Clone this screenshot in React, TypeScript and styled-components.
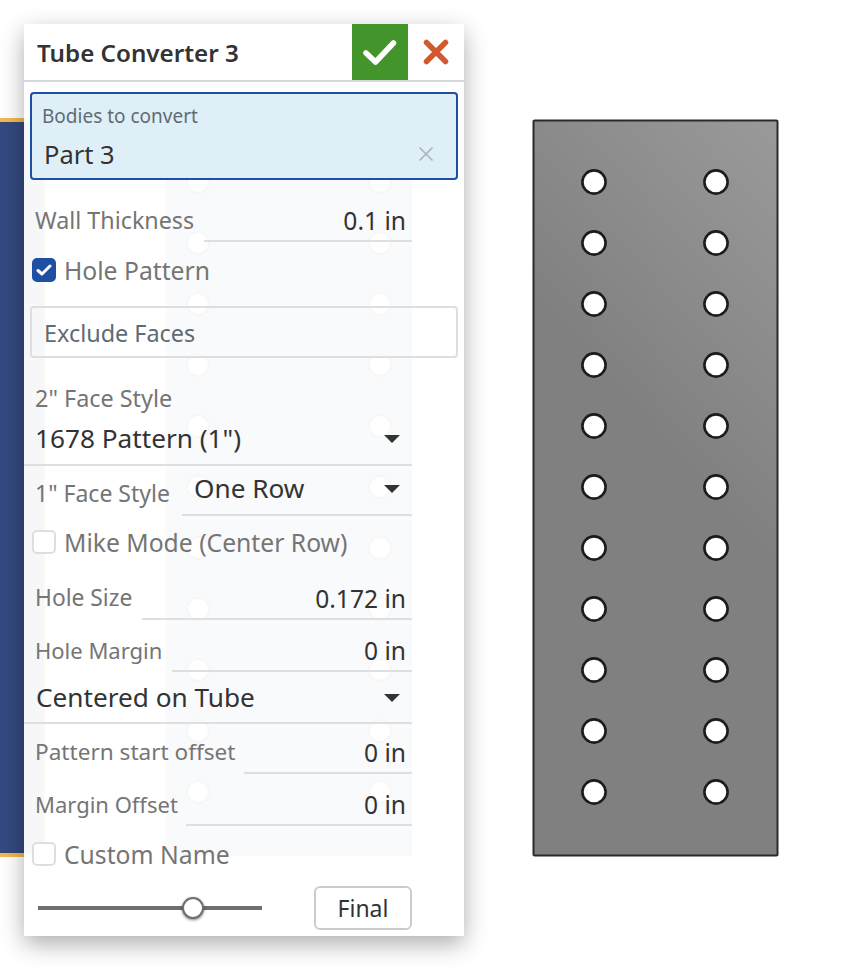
import React from 'react';
import styled, { createGlobalStyle } from 'styled-components';

const GlobalStyle = createGlobalStyle`
    html, body {
        margin: 0;
        padding: 0;
        background: #fff;
    }
    body {
        font-family: "Noto Sans", "Liberation Sans", sans-serif;
        overflow: hidden;
    }
`;

const HOLE_ROWS = [182, 243, 304, 365, 426, 487, 548, 609, 670, 731, 792];

const App: React.FC = () => {
    return (
        <Page>
            <GlobalStyle />
            <BlueBody />
            <GhostPart />
            <TubePart />
            <Panel>
                <Header>
                    <Title>Tube Converter 3</Title>
                    <AcceptButton>
                        <svg width="34" height="28" viewBox="0 0 34 28">
                            <path d="M3 15 L12.5 24 L30.5 5" fill="none" stroke="#fff" strokeWidth="5.5" strokeLinecap="round" strokeLinejoin="round" />
                        </svg>
                    </AcceptButton>
                    <CancelButton>
                        <svg width="26" height="26" viewBox="0 0 26 26">
                            <path d="M3.5 3.5 L22.5 22.5 M22.5 3.5 L3.5 22.5" fill="none" stroke="#d2582f" strokeWidth="5.5" strokeLinecap="round" />
                        </svg>
                    </CancelButton>
                </Header>
                <Body>
                    <QueryBox $active>
                        <QueryLabel>Bodies to convert</QueryLabel>
                        <QueryValue>
                            Part 3
                            <svg width="16" height="16" viewBox="0 0 16 16">
                                <path d="M1.5 1.5 L14.5 14.5 M14.5 1.5 L1.5 14.5" fill="none" stroke="#a9b4bb" strokeWidth="1.6" />
                            </svg>
                        </QueryValue>
                    </QueryBox>
                    <NumberField label="Wall Thickness" value="0.1 in" lineFrom={204} top={26} labelSize={23.3} />
                    <CheckRow $top={16}>
                        <CheckBox $checked>
                            <svg width="16" height="14" viewBox="0 0 16 14">
                                <path d="M2 7.5 L6 11 L14 3" fill="none" stroke="#fff" strokeWidth="3" strokeLinecap="round" strokeLinejoin="round" />
                            </svg>
                        </CheckBox>
                        Hole Pattern
                    </CheckRow>
                    <QueryBox $top={24}>
                        <ExcludeLabel>Exclude Faces</ExcludeLabel>
                    </QueryBox>
                    <StackLabel>2" Face Style</StackLabel>
                    <SelectRow $height={54}>
                        <SelectText>1678 Pattern (1")</SelectText>
                        <Caret />
                    </SelectRow>
                    <InlineSelect>
                        <InlineLabel>1" Face Style</InlineLabel>
                        <SelectRow $height={50} $width={230} $lift={5}>
                            <SelectText $pad={12}>One Row</SelectText>
                            <Caret />
                        </SelectRow>
                    </InlineSelect>
                    <CheckRow $top={14}>
                        <CheckBox />
                        Mike Mode (Center Row)
                    </CheckRow>
                    <NumberField label="Hole Size" value="0.172 in" lineFrom={142} top={30} labelSize={22.8} />
                    <NumberField label="Hole Margin" value="0 in" lineFrom={172} top={16} />
                    <SelectRow $height={52}>
                        <SelectText $pad={12}>Centered on Tube</SelectText>
                        <Caret />
                    </SelectRow>
                    <NumberField label="Pattern start offset" value="0 in" lineFrom={244} top={14} labelSize={22.6} />
                    <NumberField label="Margin Offset" value="0 in" lineFrom={186} top={16} />
                    <CheckRow $top={16}>
                        <CheckBox />
                        Custom Name
                    </CheckRow>
                    <Footer>
                        <SliderTrack>
                            <SliderKnob />
                        </SliderTrack>
                        <FinalButton>Final</FinalButton>
                    </Footer>
                </Body>
            </Panel>
        </Page>
    );
};

export default App;

const NumberField: React.FC<{ label: string; value: string; lineFrom: number; top: number; labelSize?: number }> = ({ label, value, lineFrom, top, labelSize }) => (
    <NumberRow $top={top}>
        <FieldLabel $size={labelSize}>{label}</FieldLabel>
        <NumberValue $from={lineFrom}>{value}</NumberValue>
    </NumberRow>
);

const BlueBody: React.FC = () => (
    <BlueSvg width="46" height="739" viewBox="0 0 46 739">
        <rect x="0" y="0" width="46" height="739" fill="#f1b94f" />
        <rect x="0" y="4" width="44" height="731" fill="#34497f" />
    </BlueSvg>
);

const GhostPart: React.FC = () => (
    <GhostSvg width="246" height="736" viewBox="0 0 246 736">
        <rect x="0" y="0" width="246" height="736" fill="#7f8896" />
        {HOLE_ROWS.map((y) => (
            <g key={y}>
                <circle cx="32" cy={y - 120} r="11" fill="#fff" stroke="#444" strokeWidth="2" />
                <circle cx="214" cy={y - 120} r="11" fill="#fff" stroke="#444" strokeWidth="2" />
            </g>
        ))}
    </GhostSvg>
);

const TubePart: React.FC = () => (
    <PartSvg width="248" height="738" viewBox="0 0 248 738">
        <defs>
            <linearGradient id="tubeFace" gradientUnits="userSpaceOnUse" x1="245" y1="0" x2="20" y2="200">
                <stop offset="0" stopColor="#9a9a9a" />
                <stop offset="1" stopColor="#808080" />
            </linearGradient>
        </defs>
        <rect x="1.5" y="1.5" width="244" height="735" rx="1" fill="url(#tubeFace)" stroke="#2a2a2a" strokeWidth="2" />
        {HOLE_ROWS.map((y) => (
            <g key={y}>
                <circle cx="62" cy={y - 119} r="11.6" fill="#fff" stroke="#1c1c1c" strokeWidth="2.6" />
                <circle cx="184" cy={y - 119} r="11.6" fill="#fff" stroke="#1c1c1c" strokeWidth="2.6" />
            </g>
        ))}
    </PartSvg>
);

const Page = styled.div`
    position: relative;
    width: 854px;
    height: 968px;
    overflow: hidden;
    background: #fff;
`;

const BlueSvg = styled.svg`
    position: absolute;
    left: 0;
    top: 118px;
`;

const GhostSvg = styled.svg`
    position: absolute;
    left: 166px;
    top: 120px;
`;

const PartSvg = styled.svg`
    position: absolute;
    left: 532px;
    top: 119px;
    filter: blur(0.5px);
`;

const Panel = styled.div`
    position: absolute;
    left: 24px;
    top: 24px;
    width: 440px;
    height: 912px;
    background: rgba(255, 255, 255, 0.955);
    box-shadow: 0 8px 22px rgba(0, 0, 0, 0.32);
`;

const Header = styled.div`
    display: flex;
    align-items: stretch;
    height: 56px;
    background: #fff;
    border-bottom: 2px solid #d5d9dc;
`;

const Title = styled.div`
    flex: 1;
    padding-left: 13px;
    line-height: 57px;
    font-size: 24.2px;
    font-weight: 600;
    color: #333;
`;

const AcceptButton = styled.div`
    width: 56px;
    height: 56px;
    background: #43942a;
    display: flex;
    align-items: center;
    justify-content: center;
`;

const CancelButton = styled.div`
    width: 56px;
    height: 56px;
    display: flex;
    align-items: center;
    justify-content: center;
`;

const Body = styled.div`
    display: flex;
    flex-direction: column;
`;

const QueryBox = styled.div<{ $active?: boolean; $top?: number }>`
    box-sizing: border-box;
    margin: ${(p) => (p.$active ? 10 : p.$top ?? 0)}px 6px 0;
    height: ${(p) => (p.$active ? 88 : 52)}px;
    padding: ${(p) => (p.$active ? '10px 12px 0 10px' : '11px 12px 0 12px')};
    border: 2px solid ${(p) => (p.$active ? '#1f4fa3' : '#dcdee0')};
    border-radius: 4px;
    background: ${(p) => (p.$active ? '#dfeff8' : 'transparent')};
`;

const QueryLabel = styled.div`
    font-size: 19px;
    line-height: 24px;
    color: #5f6b73;
`;

const QueryValue = styled.div`
    display: flex;
    align-items: center;
    justify-content: space-between;
    margin-top: 10px;
    padding: 0 10px 0 2px;
    font-size: 25.5px;
    line-height: 32px;
    color: #333;
`;

const ExcludeLabel = styled.div`
    font-size: 23.4px;
    line-height: 28px;
    color: #5f6b73;
`;

const NumberRow = styled.div<{ $top: number }>`
    position: relative;
    height: 36px;
    margin-top: ${(p) => p.$top}px;
    width: 388px;
`;

const FieldLabel = styled.div<{ $size?: number }>`
    padding-left: 11px;
    font-size: ${(p) => p.$size ?? 22}px;
    line-height: 28px;
    color: #757575;
    white-space: nowrap;
`;

const InlineLabel = styled(FieldLabel)`
    margin-top: 3px;
    font-size: 23px;
`;

const NumberValue = styled.div<{ $from: number }>`
    position: absolute;
    left: ${(p) => p.$from - 24}px;
    right: 0;
    top: 0;
    height: 34px;
    padding-right: 6px;
    border-bottom: 2px solid #dedfe0;
    text-align: right;
    font-size: 24.6px;
    line-height: 29px;
    color: #333;
`;

const CheckRow = styled.div<{ $top: number }>`
    display: flex;
    align-items: center;
    gap: 8px;
    height: 24px;
    margin: ${(p) => p.$top}px 0 0 8px;
    font-size: 24.7px;
    color: #757575;
`;

const CheckBox = styled.div<{ $checked?: boolean }>`
    box-sizing: border-box;
    width: 24px;
    height: 24px;
    flex: none;
    display: flex;
    align-items: center;
    justify-content: center;
    border-radius: 5px;
    border: 2px solid ${(p) => (p.$checked ? '#1f4fa3' : '#dcdee0')};
    background: ${(p) => (p.$checked ? '#1f4fa3' : '#fff')};
`;

const StackLabel = styled.div`
    margin-top: 26px;
    padding-left: 11px;
    font-size: 23.4px;
    line-height: 28px;
    color: #757575;
`;

const SelectRow = styled.div<{ $height: number; $width?: number; $lift?: number }>`
    box-sizing: border-box;
    display: flex;
    align-items: center;
    justify-content: space-between;
    flex: none;
    width: ${(p) => p.$width ?? 388}px;
    height: ${(p) => p.$height}px;
    border-bottom: 2px solid #dedfe0;
    padding: 0 12px ${(p) => p.$lift ?? 0}px 0;
`;

const SelectText = styled.div<{ $pad?: number }>`
    padding-left: ${(p) => p.$pad ?? 11}px;
    font-size: 26.2px;
    color: #333;
    white-space: nowrap;
`;

const Caret = styled.div`
    width: 0;
    height: 0;
    margin-top: 2px;
    border-left: 8px solid transparent;
    border-right: 8px solid transparent;
    border-top: 8px solid #333;
`;

const InlineSelect = styled.div`
    display: flex;
    align-items: center;
    justify-content: space-between;
    width: 388px;
`;

const Footer = styled.div`
    display: flex;
    align-items: center;
    justify-content: space-between;
    width: 388px;
    margin-top: 20px;
    padding-left: 14px;
    box-sizing: border-box;
`;

const SliderTrack = styled.div`
    position: relative;
    width: 224px;
    height: 4px;
    background: #6f6f6f;
`;

const SliderKnob = styled.div`
    position: absolute;
    left: 144px;
    top: -9px;
    box-sizing: border-box;
    width: 22px;
    height: 22px;
    border-radius: 50%;
    background: #fff;
    border: 2px solid #6f6f6f;
    box-shadow: 0 1px 3px rgba(0, 0, 0, 0.5);
`;

const FinalButton = styled.div`
    box-sizing: border-box;
    width: 98px;
    height: 44px;
    border: 2px solid #c9cccf;
    border-radius: 6px;
    text-align: center;
    line-height: 40px;
    font-size: 23px;
    color: #333;
    background: #fff;
`;
